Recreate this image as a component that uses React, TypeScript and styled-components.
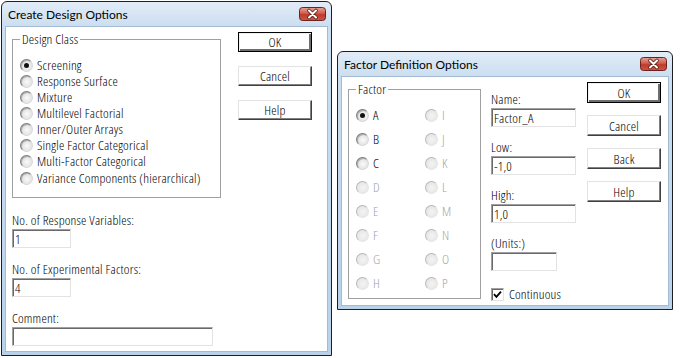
import React from "react";
import styled, { createGlobalStyle, css } from "styled-components";

const UI = `"Open Sans", "DejaVu Sans Condensed", sans-serif`;
const TITLE = `Lato, "Noto Sans", sans-serif`;

const Global = createGlobalStyle`
  html, body { margin: 0; padding: 0; background: #fff; }
  body {
    font-family: ${UI};
    font-stretch: 75%;
    font-weight: 350;
    font-size: 13.5px;
    letter-spacing: 0.2px;
    color: #000;
  }
  * { box-sizing: border-box; }
`;

const Desktop = styled.div`
  position: relative;
  width: 691px;
  height: 358px;
  overflow: hidden;
  background: #fff;
`;

const Win = styled.div<{ $x: number; $y: number; $w: number; $h: number }>`
  position: absolute;
  left: ${(p) => p.$x}px;
  top: ${(p) => p.$y}px;
  width: ${(p) => p.$w}px;
  height: ${(p) => p.$h}px;
  display: flex;
  flex-direction: column;
  border: 1px solid #1f1f1f;
  border-radius: 6px 6px 0 0;
  padding: 0 3px 3px;
  background: linear-gradient(to bottom, #e1ecf7 0px, #ccdef1 24px, #b9d2ea 100%);
`;

const TitleBar = styled.div`
  height: 24px;
  flex: none;
  display: flex;
  align-items: center;
  justify-content: space-between;
  padding-left: 3px;
  font-family: ${TITLE};
  font-stretch: normal;
  font-weight: 400;
  letter-spacing: 0;
  font-size: 12px;
  color: #000;
`;

const Client = styled.div`
  flex: 1;
  display: flex;
  align-items: flex-start;
  background: #fff;
  border: 1px solid #a3bad3;
  padding-left: 6px;
`;

const MainCol = styled.div<{ $w: number }>`
  width: ${(p) => p.$w}px;
  margin-top: 12px;
  display: flex;
  flex-direction: column;
`;

const SideCol = styled.div<{ $ml: number; $mt: number; $w: number }>`
  margin-left: ${(p) => p.$ml}px;
  margin-top: ${(p) => p.$mt}px;
  width: ${(p) => p.$w}px;
  display: flex;
  flex-direction: column;
`;

const ButtonCol = styled.div<{ $ml: number; $gap: number }>`
  margin-left: ${(p) => p.$ml}px;
  margin-top: 5px;
  display: flex;
  flex-direction: column;
  gap: ${(p) => p.$gap}px;
`;

const Button = styled.button<{ $default?: boolean; $h: number }>`
  width: 74px;
  height: ${(p) => p.$h}px;
  padding: 0;
  margin: 0;
  font-family: ${UI};
  font-stretch: 75%;
  font-weight: 350;
  font-size: 13.5px;
  letter-spacing: 0.2px;
  line-height: 16px;
  color: #000;
  background: #fff;
  border: 1px solid;
  border-color: #e3e3e3 #404040 #404040 #e3e3e3;
  box-shadow: inset -1px -1px 0 #808080;
  ${(p) =>
    p.$default &&
    css`
      border-color: #000;
      box-shadow: inset 1px 1px 0 #f0f0f0, inset -2px -2px 0 #6e6e6e;
    `}
`;

const Group = styled.div<{ $w: number; $pad: string }>`
  position: relative;
  width: ${(p) => p.$w}px;
  border: 1px solid #a0a0a0;
  padding: ${(p) => p.$pad};
`;

const Legend = styled.span`
  position: absolute;
  top: -9px;
  left: 7px;
  padding: 0 2px;
  line-height: 16px;
  background: #fff;
`;

const RadioRow = styled.div<{ $h: number; $disabled?: boolean }>`
  display: flex;
  align-items: center;
  gap: 4px;
  height: ${(p) => p.$h}px;
  line-height: 15px;
  white-space: nowrap;
  color: ${(p) => (p.$disabled ? "#a3a3a3" : "#000")};
`;

const RadioCircle = styled.span<{ $checked?: boolean; $disabled?: boolean }>`
  position: relative;
  flex: none;
  width: 13px;
  height: 13px;
  border-radius: 50%;
  border: 1px solid;
  border-color: ${(p) =>
    p.$disabled ? "#b8b8b8 #e4e4e4 #e4e4e4 #b8b8b8" : "#7a7a7a #d8d8d8 #d8d8d8 #7a7a7a"};
  background: ${(p) =>
    p.$disabled
      ? "radial-gradient(circle at 55% 55%, #f4f4f4 0, #e6e6e6 70%)"
      : "radial-gradient(circle at 55% 55%, #fbfbfb 0, #dcdcdc 75%)"};
  box-shadow: ${(p) => (p.$disabled ? "none" : "inset 1px 1px 0 rgba(90,90,90,0.35)")};
  ${(p) =>
    p.$checked &&
    css`
      &::after {
        content: "";
        position: absolute;
        left: 3px;
        top: 3px;
        width: 5px;
        height: 5px;
        border-radius: 50%;
        background: #111;
      }
    `}
`;

const RadioGrid = styled.div`
  display: grid;
  grid-template-columns: 69px 56px;
  grid-template-rows: repeat(8, 24px);
  grid-auto-flow: column;
`;

const FieldLabel = styled.div<{ $mt: number }>`
  margin-top: ${(p) => p.$mt}px;
  margin-bottom: 1px;
  line-height: 16px;
  white-space: nowrap;
`;

const TextBox = styled.div<{ $w: number }>`
  width: ${(p) => p.$w}px;
  height: 19px;
  border: 1px solid;
  border-color: #a0a0a0 #e3e3e3 #e3e3e3 #a0a0a0;
  box-shadow: inset 1px 1px 0 #696969;
  padding: 1px 0 0 2px;
  line-height: 16px;
  white-space: nowrap;
  background: #fff;
`;

const CheckRow = styled.div`
  margin-top: 15px;
  display: flex;
  align-items: center;
  gap: 5px;
  height: 16px;
  line-height: 16px;
`;

const CheckBox = styled.span`
  flex: none;
  width: 13px;
  height: 13px;
  display: flex;
  align-items: center;
  justify-content: center;
  border: 1px solid;
  border-color: #a0a0a0 #e3e3e3 #e3e3e3 #a0a0a0;
  box-shadow: inset 1px 1px 0 #696969;
  background: #fff;
`;

const CloseBtn = () => (
  <svg width="27" height="14" viewBox="0 0 27 14" style={{ marginRight: 2, flex: "none" }}>
    <defs>
      <linearGradient id="cg" x1="0" y1="0" x2="0" y2="1">
        <stop offset="0" stopColor="#e6a59a" />
        <stop offset="0.45" stopColor="#cf5c4c" />
        <stop offset="0.55" stopColor="#bf3c2c" />
        <stop offset="1" stopColor="#c9574a" />
      </linearGradient>
    </defs>
    <rect x="0.5" y="0.5" width="26" height="13" rx="3" fill="url(#cg)" stroke="#6e2219" />
    <path d="M10 3.5 L17 10.5 M17 3.5 L10 10.5" stroke="#5a1a12" strokeWidth="3.6" strokeLinecap="round" />
    <path d="M10 3.5 L17 10.5 M17 3.5 L10 10.5" stroke="#fff" strokeWidth="2" strokeLinecap="round" />
  </svg>
);

const CheckMark = () => (
  <svg width="9" height="9" viewBox="0 0 9 9">
    <path d="M1 4.2 L3.4 6.8 L8 1.6" stroke="#000" strokeWidth="1.8" fill="none" />
  </svg>
);

const designClasses = [
  "Screening",
  "Response Surface",
  "Mixture",
  "Multilevel Factorial",
  "Inner/Outer Arrays",
  "Single Factor Categorical",
  "Multi-Factor Categorical",
  "Variance Components (hierarchical)",
];

const factors = "ABCDEFGHIJKLMNOP".split("");

export default function App() {
  return (
    <>
      <Global />
      <Desktop>
        <Win $x={1} $y={1} $w={331} $h={355}>
          <TitleBar>
            <span>Create Design Options</span>
            <CloseBtn />
          </TitleBar>
          <Client>
            <MainCol $w={209}>
              <Group $w={209} $pad="17px 0 11px 7px">
                <Legend>Design Class</Legend>
                {designClasses.map((c, i) => (
                  <RadioRow key={c} $h={16.15}>
                    <RadioCircle $checked={i === 0} />
                    <span>{c}</span>
                  </RadioRow>
                ))}
              </Group>
              <FieldLabel $mt={14}>No. of Response Variables:</FieldLabel>
              <TextBox $w={59}>1</TextBox>
              <FieldLabel $mt={13}>No. of Experimental Factors:</FieldLabel>
              <TextBox $w={59}>4</TextBox>
              <FieldLabel $mt={13}>Comment:</FieldLabel>
              <TextBox $w={201} />
            </MainCol>
            <ButtonCol $ml={17} $gap={14}>
              <Button $default $h={20}>OK</Button>
              <Button $h={20}>Cancel</Button>
              <Button $h={20}>Help</Button>
            </ButtonCol>
          </Client>
        </Win>

        <Win $x={337} $y={51} $w={336} $h={259}>
          <TitleBar>
            <span>Factor Definition Options</span>
            <CloseBtn />
          </TitleBar>
          <Client>
            <MainCol $w={133}>
              <Group $w={133} $pad="13px 0 3px 7px">
                <Legend>Factor</Legend>
                <RadioGrid>
                  {factors.map((f, i) => {
                    const disabled = i >= 3;
                    return (
                      <RadioRow key={f} $h={24} $disabled={disabled}>
                        <RadioCircle $checked={i === 0} $disabled={disabled} />
                        <span>{f}</span>
                      </RadioRow>
                    );
                  })}
                </RadioGrid>
              </Group>
            </MainCol>
            <SideCol $ml={10} $mt={14} $w={85}>
              <FieldLabel $mt={0}>Name:</FieldLabel>
              <TextBox $w={85}>Factor_A</TextBox>
              <FieldLabel $mt={12}>Low:</FieldLabel>
              <TextBox $w={85}>-1,0</TextBox>
              <FieldLabel $mt={12}>High:</FieldLabel>
              <TextBox $w={85}>1,0</TextBox>
              <FieldLabel $mt={12}>(Units:)</FieldLabel>
              <TextBox $w={66} />
              <CheckRow>
                <CheckBox>
                  <CheckMark />
                </CheckBox>
                <span>Continuous</span>
              </CheckRow>
            </SideCol>
            <ButtonCol $ml={11} $gap={12}>
              <Button $default $h={21}>OK</Button>
              <Button $h={21}>Cancel</Button>
              <Button $h={21}>Back</Button>
              <Button $h={21}>Help</Button>
            </ButtonCol>
          </Client>
        </Win>
      </Desktop>
    </>
  );
}
